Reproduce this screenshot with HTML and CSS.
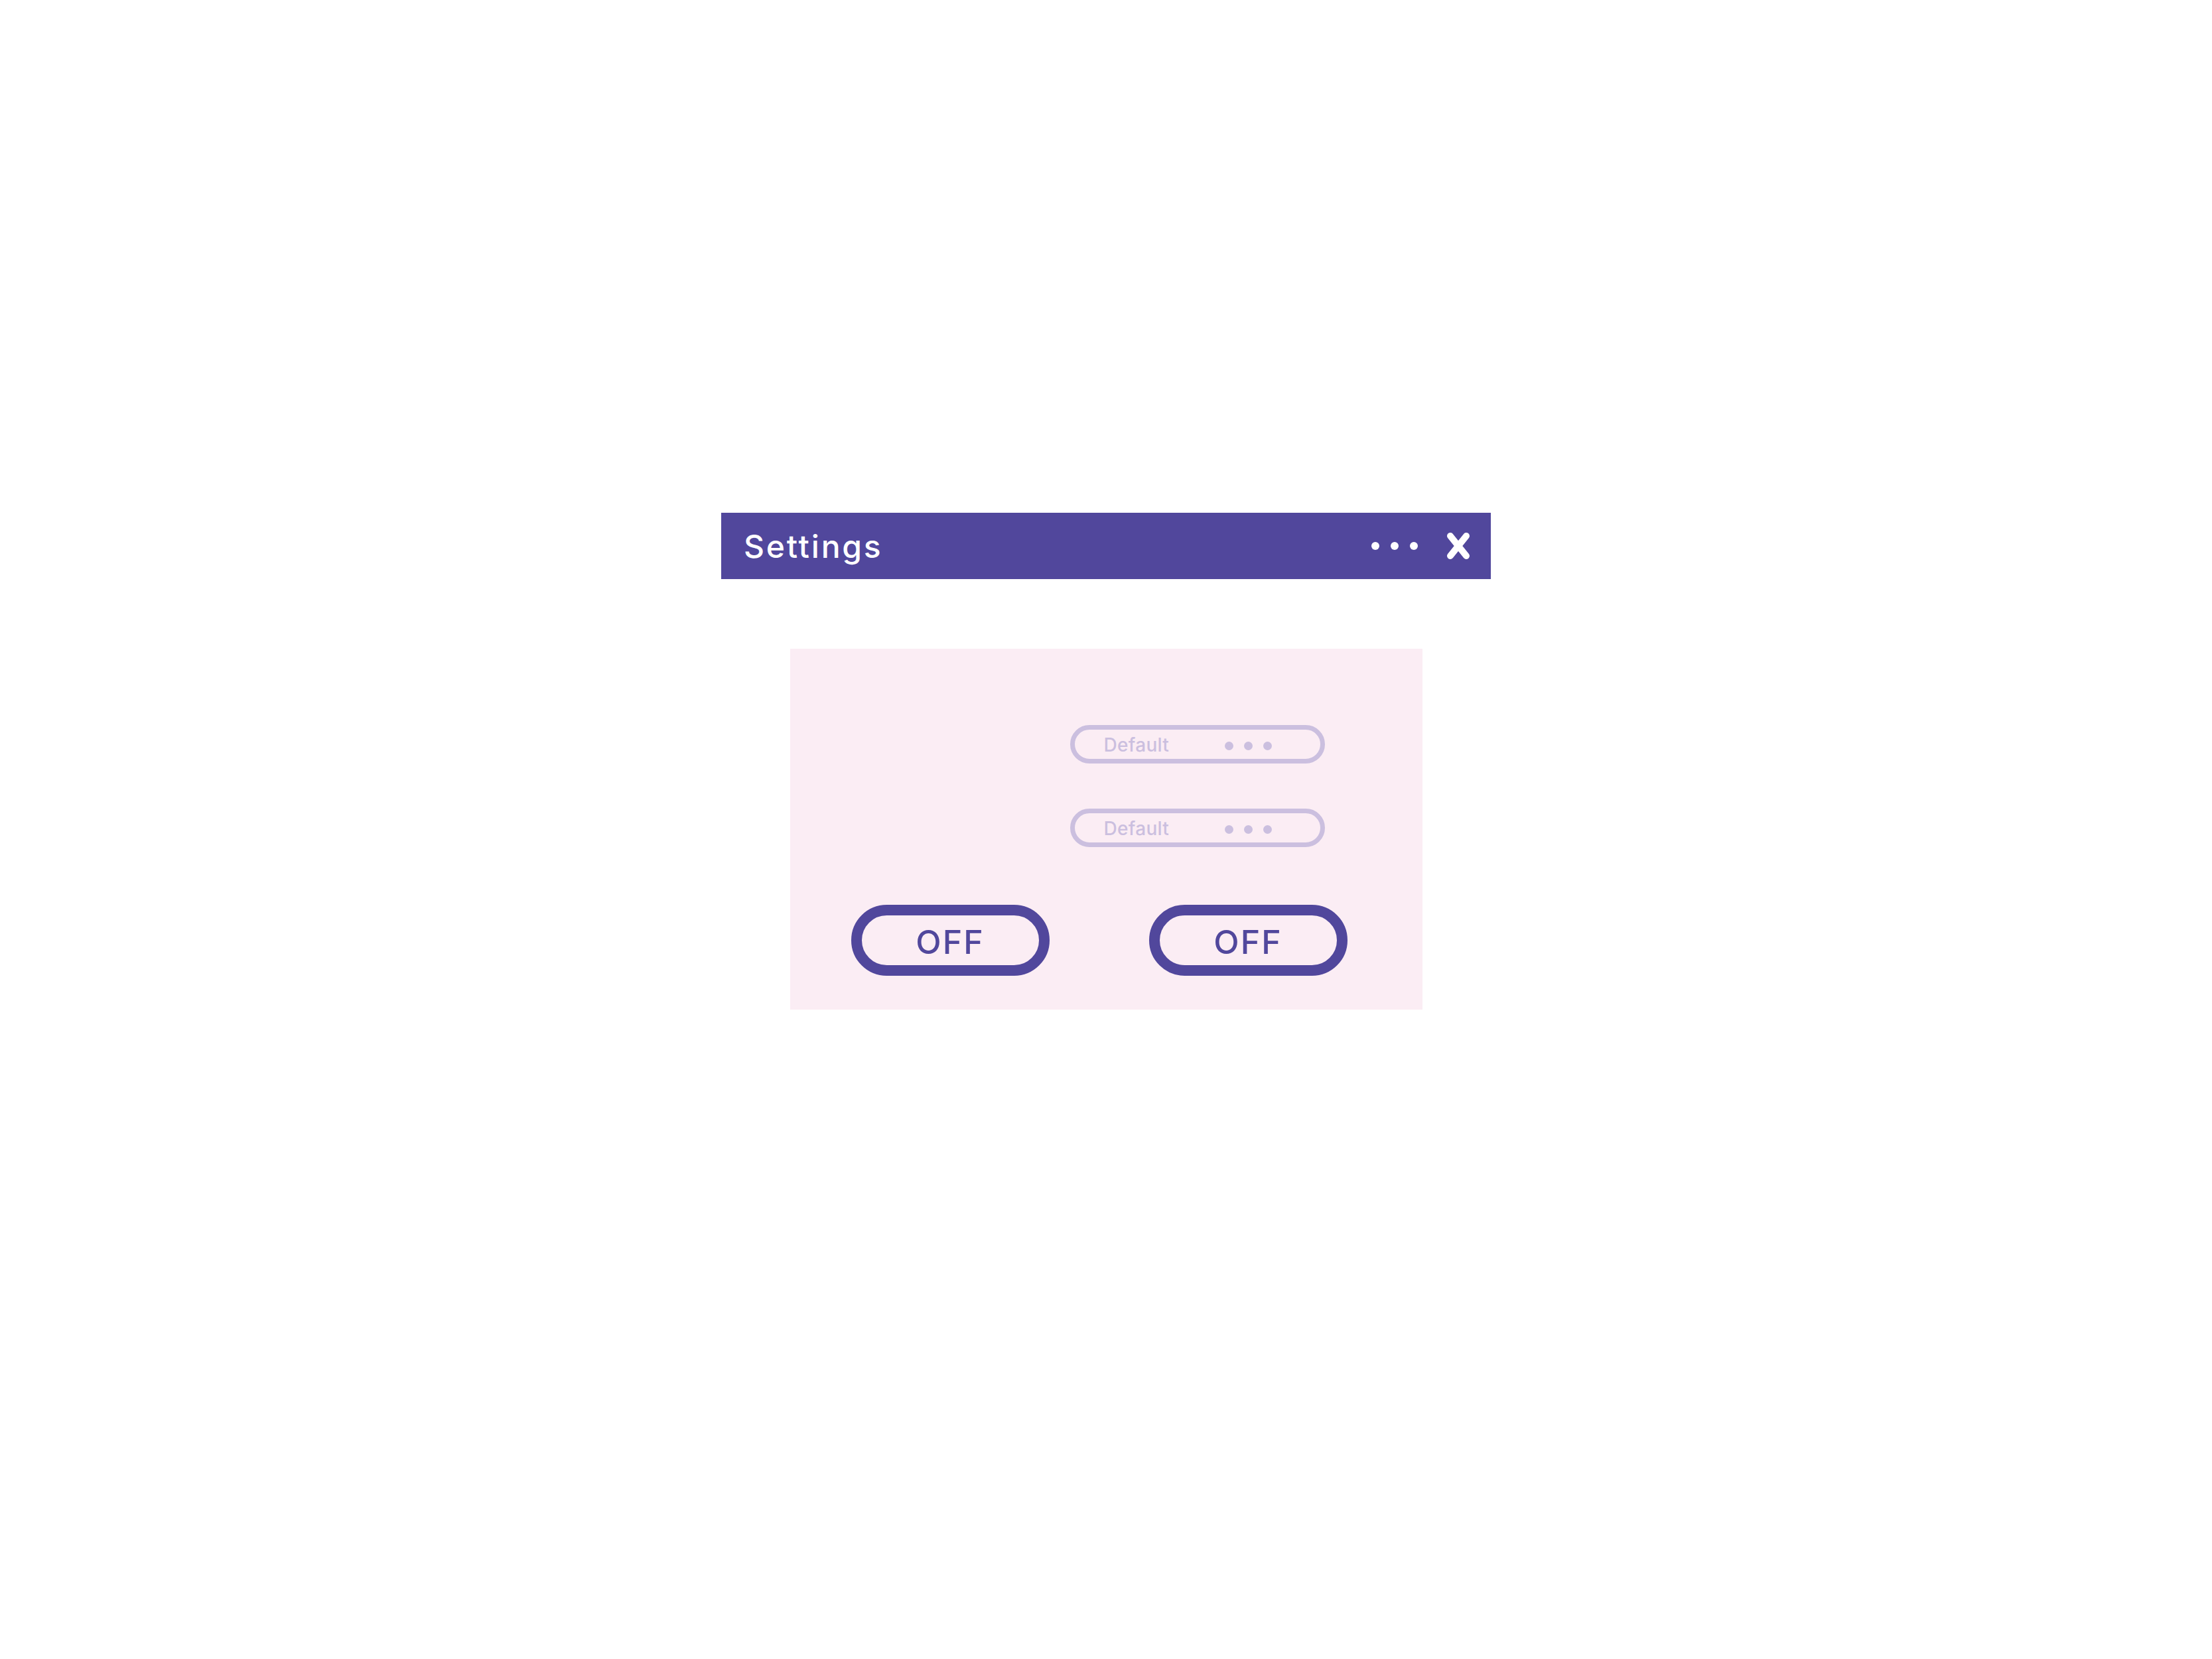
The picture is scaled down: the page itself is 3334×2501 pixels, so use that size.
FILE: index.html
```html
<!DOCTYPE html>
<html lang="en">
<head>
<meta charset="utf-8">
<title>Settings</title>
<link rel="stylesheet" href="styles.css">
</head>
<body>
<div class="window">
  <div class="titlebar">
    <span class="title">Settings</span>
    <div class="actions">
      <div class="dots light"><span></span><span></span><span></span></div>
      <svg class="close" width="36" height="42" viewBox="0 0 36 42" aria-hidden="true">
        <path d="M6 6 L30 36 M30 6 L6 36" stroke="#ffffff" stroke-width="10" stroke-linecap="round" fill="none"/>
      </svg>
    </div>
  </div>
  <div class="panel">
    <div class="selects">
      <div class="select"><span class="select-label">Default</span><div class="dots muted"><span></span><span></span><span></span></div></div>
      <div class="select"><span class="select-label">Default</span><div class="dots muted"><span></span><span></span><span></span></div></div>
    </div>
    <div class="toggles">
      <div class="toggle">OFF</div>
      <div class="toggle">OFF</div>
    </div>
  </div>
</div>
</body>
</html>
```

FILE: styles.css
```css
html, body {
  margin: 0;
  padding: 0;
  background: #ffffff;
}

body {
  font-family: "Inter", "Liberation Sans", sans-serif;
}

.window {
  width: 1160px;
  margin: 773px auto 0;
  display: flex;
  flex-direction: column;
  align-items: center;
}

.titlebar {
  width: 100%;
  height: 100px;
  box-sizing: border-box;
  background: #51479c;
  display: flex;
  align-items: center;
  justify-content: space-between;
  padding: 0 31px 0 34px;
}

.title {
  color: #ffffff;
  font-size: 48px;
  font-weight: 500;
  letter-spacing: 2.8px;
  line-height: 1;
  padding-top: 2px;
}

.actions {
  display: flex;
  align-items: center;
  gap: 43px;
}

.close {
  display: block;
}

.dots {
  display: flex;
  gap: 17px;
}

.dots span {
  width: 12px;
  height: 12px;
  border-radius: 50%;
  display: block;
}

.dots.light span {
  background: #ffffff;
}

.dots.muted {
  gap: 16px;
}

.dots.muted span {
  width: 13px;
  height: 13px;
  background: #cbbfdf;
}

.panel {
  margin-top: 105px;
  width: 953px;
  height: 544px;
  box-sizing: border-box;
  background: #fbedf4;
  padding: 115px 113px 0 92px;
  display: flex;
  flex-direction: column;
}

.selects {
  display: flex;
  flex-direction: column;
  align-items: flex-end;
  gap: 68px;
  padding-right: 34px;
}

.select {
  width: 384px;
  height: 58px;
  box-sizing: border-box;
  border: 7px solid #cbbfdf;
  border-radius: 29px;
  display: flex;
  align-items: center;
  padding-left: 44px;
}

.select-label {
  width: 182px;
  color: #cbbfdf;
  font-size: 28px;
  font-weight: 500;
  line-height: 1;
  letter-spacing: 0.3px;
  padding-top: 2px;
}

.select .dots {
  margin-top: 4px;
}

.toggles {
  margin-top: 87px;
  display: flex;
  gap: 150px;
}

.toggle {
  flex: 0 0 299px;
  height: 107px;
  box-sizing: border-box;
  border: 16px solid #51479c;
  border-radius: 54px;
  display: flex;
  align-items: center;
  justify-content: center;
  color: #51479c;
  font-size: 50px;
  font-weight: 500;
  letter-spacing: 2px;
  line-height: 1;
  padding-top: 4px;
}
```
